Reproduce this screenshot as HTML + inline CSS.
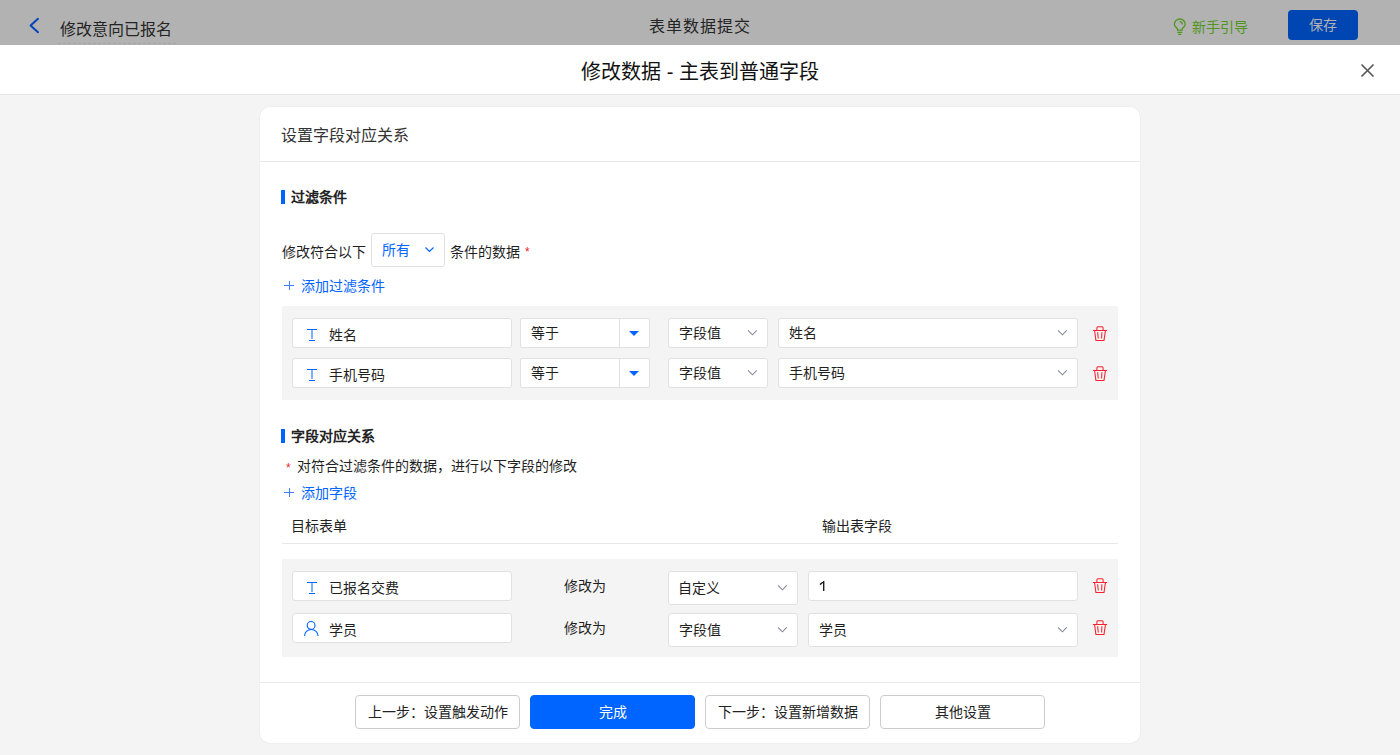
<!DOCTYPE html>
<html lang="zh-CN">
<head>
<meta charset="utf-8">
<style>
*{margin:0;padding:0;box-sizing:border-box}
html,body{width:1400px;height:755px;overflow:hidden;background:#f4f4f4;font-family:"Liberation Sans",sans-serif;color:#1f1f1f;position:relative}
.a{position:absolute;white-space:nowrap}
.t14{font-size:14px;line-height:20px;height:20px}
.t16{font-size:16px;line-height:22px;height:22px}
.box{position:absolute;background:#fff;border:1px solid #e1e1e1;border-radius:3px}
.chev{position:absolute;width:9px;height:5px;overflow:visible}
.trash{position:absolute;width:16px;height:16px}
.btn{position:absolute;top:695px;height:34px;width:165px;border:1px solid #cdcdcd;border-radius:4px;background:#fff;font-size:14px;line-height:32px;text-align:center;color:#222}
</style>
</head>
<body>
<!-- top bar (under modal mask) -->
<div class="a" style="left:0;top:0;width:1400px;height:45px;background:#b2b2b2"></div>
<svg class="a" style="left:28px;top:17px" width="12" height="17" viewBox="0 0 12 17"><path d="M10 1.8 L2.6 8.5 L10 15.2" fill="none" stroke="#0044bb" stroke-width="2" stroke-linecap="round" stroke-linejoin="round"/></svg>
<div class="a t16" style="left:60px;top:19px;color:#242424">修改意向已报名</div>
<div class="a" style="left:58px;top:43px;width:118px;height:1px;border-top:1px dashed #a4a4a4"></div>
<div class="a t16" style="left:649px;top:16px;color:#242424;letter-spacing:1px">表单数据提交</div>
<svg class="a" style="left:1168px;top:14px" width="24" height="24" viewBox="0 0 24 24"><path d="M9.5 16.2 V15.3 C9.5 13.9 6.4 12.9 6.4 10.4 A5.4 5.4 0 0 1 17.2 10.4 C17.2 12.9 14.1 13.9 14.1 15.3 V16.2 Z" fill="none" stroke="#50961e" stroke-width="1.3"/><path d="M9.3 18.4 H14.3 M10.2 20.3 H13.3" stroke="#50961e" stroke-width="1.2"/><path d="M11.5 7.6 A2.9 2.9 0 0 1 14.4 10.5" fill="none" stroke="#50961e" stroke-width="1.2"/></svg>
<div class="a t14" style="left:1192px;top:17px;color:#50961e">新手引导</div>
<div class="a" style="left:1288px;top:10px;width:70px;height:30px;background:#0046b2;border-radius:4px;color:#b2b2b2;font-size:14px;line-height:30px;text-align:center">保存</div>

<!-- modal header -->
<div class="a" style="left:0;top:45px;width:1400px;height:50px;background:#fff;border-bottom:1px solid #e5e5e5"></div>
<div class="a" style="left:0;top:58px;width:1400px;text-align:center;font-size:20px;line-height:28px;color:#111">修改数据 - 主表到普通字段</div>
<svg class="a" style="left:1360px;top:63px" width="15" height="15" viewBox="0 0 15 15"><path d="M1.5 1.5 L13.5 13.5 M13.5 1.5 L1.5 13.5" stroke="#555" stroke-width="1.6"/></svg>

<!-- card -->
<div class="a" style="left:260px;top:107px;width:880px;height:636px;background:#fff;border-radius:10px;box-shadow:0 0 2px rgba(0,0,0,0.08)"></div>
<div class="a t16" style="left:281px;top:125px;color:#333">设置字段对应关系</div>
<div class="a" style="left:260px;top:161px;width:880px;height:1px;background:#e8e8e8"></div>

<!-- section 1 -->
<div class="a" style="left:281px;top:190px;width:4px;height:14px;background:#0064ff"></div>
<div class="a t14" style="left:291px;top:187px;font-weight:bold;color:#222">过滤条件</div>

<div class="a t14" style="left:282px;top:242px">修改符合以下</div>
<div class="box" style="left:371px;top:233px;width:74px;height:34px"></div>
<div class="a t14" style="left:382px;top:240px;color:#0064ff">所有</div>
<svg class="chev" style="left:425px;top:247px" viewBox="0 0 9 5"><path d="M0.5 0.5 L4.5 4.5 L8.5 0.5" fill="none" stroke="#0064ff" stroke-width="1.1"/></svg>
<div class="a t14" style="left:450px;top:242px">条件的数据</div>
<div class="a" style="left:525px;top:245px;font-size:12px;line-height:14px;color:#f5222d">*</div>

<svg class="a" style="left:284px;top:281px" width="10" height="10" viewBox="0 0 10 10"><rect x="5" y="0" width="1" height="9" fill="#3d7fff"/><rect x="0" y="4" width="10" height="1" fill="#3d7fff"/></svg>
<div class="a t14" style="left:301px;top:276px;color:#0064ff">添加过滤条件</div>

<div class="a" style="left:282px;top:306px;width:836px;height:94px;background:#f4f4f4"></div>

<!-- filter row 1 -->
<div class="box" style="left:292px;top:318px;width:220px;height:30px"></div>
<svg class="a" style="left:305px;top:329px" width="12" height="13" viewBox="0 0 12 13"><rect x="2" y="0" width="10" height="1" fill="#0064ff"/><rect x="6.5" y="1" width="1" height="9" fill="#0064ff"/><rect x="4" y="11" width="6" height="1" fill="#0064ff"/></svg>
<div class="a t14" style="left:329px;top:325px">姓名</div>
<div class="box" style="left:520px;top:318px;width:130px;height:30px;border-radius:2px"></div>
<div class="a" style="left:619px;top:319px;width:1px;height:28px;background:#e1e1e1"></div>
<div class="a t14" style="left:531px;top:323px">等于</div>
<svg class="a" style="left:629px;top:331px" width="10" height="5" viewBox="0 0 10 5"><path d="M0 0 H10 L5 5 Z" fill="#0064ff"/></svg>
<div class="box" style="left:668px;top:318px;width:100px;height:30px"></div>
<div class="a t14" style="left:679px;top:323px">字段值</div>
<svg class="chev" style="left:748px;top:330px" viewBox="0 0 9 5"><path d="M0 0.3 L4.4 4.8 L8.8 0.3" fill="none" stroke="#808899" stroke-width="1.05"/></svg>
<div class="box" style="left:778px;top:318px;width:300px;height:30px"></div>
<div class="a t14" style="left:789px;top:323px">姓名</div>
<svg class="chev" style="left:1058px;top:330px" viewBox="0 0 9 5"><path d="M0 0.3 L4.4 4.8 L8.8 0.3" fill="none" stroke="#808899" stroke-width="1.05"/></svg>
<svg class="a" style="left:1088px;top:322px" width="24" height="24" viewBox="0 0 24 24"><path d="M8.9 8 V5.8 Q8.9 4.8 9.9 4.8 H14.1 Q15.1 4.8 15.1 5.8 V8 M4.9 8.5 H19.1 M6.6 8.8 L7.9 18.4 H16 L17.4 8.8 M9.6 10.2 L10.3 16.5 M13.9 10.2 L13.6 16.5" fill="none" stroke="#f5222d" stroke-width="1.05"/></svg>

<!-- filter row 2 -->
<div class="box" style="left:292px;top:358px;width:220px;height:30px"></div>
<svg class="a" style="left:305px;top:369px" width="12" height="13" viewBox="0 0 12 13"><rect x="2" y="0" width="10" height="1" fill="#0064ff"/><rect x="6.5" y="1" width="1" height="9" fill="#0064ff"/><rect x="4" y="11" width="6" height="1" fill="#0064ff"/></svg>
<div class="a t14" style="left:329px;top:365px">手机号码</div>
<div class="box" style="left:520px;top:358px;width:130px;height:30px;border-radius:2px"></div>
<div class="a" style="left:619px;top:359px;width:1px;height:28px;background:#e1e1e1"></div>
<div class="a t14" style="left:531px;top:363px">等于</div>
<svg class="a" style="left:629px;top:371px" width="10" height="5" viewBox="0 0 10 5"><path d="M0 0 H10 L5 5 Z" fill="#0064ff"/></svg>
<div class="box" style="left:668px;top:358px;width:100px;height:30px"></div>
<div class="a t14" style="left:679px;top:363px">字段值</div>
<svg class="chev" style="left:748px;top:370px" viewBox="0 0 9 5"><path d="M0 0.3 L4.4 4.8 L8.8 0.3" fill="none" stroke="#808899" stroke-width="1.05"/></svg>
<div class="box" style="left:778px;top:358px;width:300px;height:30px"></div>
<div class="a t14" style="left:789px;top:363px">手机号码</div>
<svg class="chev" style="left:1058px;top:370px" viewBox="0 0 9 5"><path d="M0 0.3 L4.4 4.8 L8.8 0.3" fill="none" stroke="#808899" stroke-width="1.05"/></svg>
<svg class="a" style="left:1088px;top:362px" width="24" height="24" viewBox="0 0 24 24"><path d="M8.9 8 V5.8 Q8.9 4.8 9.9 4.8 H14.1 Q15.1 4.8 15.1 5.8 V8 M4.9 8.5 H19.1 M6.6 8.8 L7.9 18.4 H16 L17.4 8.8 M9.6 10.2 L10.3 16.5 M13.9 10.2 L13.6 16.5" fill="none" stroke="#f5222d" stroke-width="1.05"/></svg>

<!-- section 2 -->
<div class="a" style="left:281px;top:429px;width:4px;height:14px;background:#0064ff"></div>
<div class="a t14" style="left:291px;top:426px;font-weight:bold;color:#222">字段对应关系</div>
<div class="a" style="left:286px;top:461px;font-size:12px;line-height:14px;color:#f5222d">*</div>
<div class="a t14" style="left:297px;top:456px">对符合过滤条件的数据，进行以下字段的修改</div>
<svg class="a" style="left:284px;top:488px" width="10" height="10" viewBox="0 0 10 10"><rect x="5" y="0" width="1" height="9" fill="#3d7fff"/><rect x="0" y="4" width="10" height="1" fill="#3d7fff"/></svg>
<div class="a t14" style="left:301px;top:483px;color:#0064ff">添加字段</div>
<div class="a t14" style="left:291px;top:516px">目标表单</div>
<div class="a t14" style="left:822px;top:516px">输出表字段</div>
<div class="a" style="left:282px;top:543px;width:836px;height:1px;background:#e8e8e8"></div>

<div class="a" style="left:282px;top:559px;width:836px;height:98px;background:#f4f4f4"></div>

<!-- map row 1 -->
<div class="box" style="left:292px;top:571px;width:220px;height:30px"></div>
<svg class="a" style="left:305px;top:582px" width="12" height="13" viewBox="0 0 12 13"><rect x="2" y="0" width="10" height="1" fill="#0064ff"/><rect x="6.5" y="1" width="1" height="9" fill="#0064ff"/><rect x="4" y="11" width="6" height="1" fill="#0064ff"/></svg>
<div class="a t14" style="left:329px;top:578px">已报名交费</div>
<div class="a t14" style="left:564px;top:576px">修改为</div>
<div class="box" style="left:668px;top:571px;width:130px;height:34px"></div>
<div class="a t14" style="left:678px;top:578px">自定义</div>
<svg class="chev" style="left:778px;top:585px" viewBox="0 0 9 5"><path d="M0 0.3 L4.4 4.8 L8.8 0.3" fill="none" stroke="#808899" stroke-width="1.05"/></svg>
<div class="box" style="left:808px;top:571px;width:270px;height:30px"></div>
<svg class="a" style="left:819px;top:580px" width="7" height="12" viewBox="0 0 7 12"><path d="M1 4.6 L4.6 1.5 M4.7 1 V11" fill="none" stroke="#1f1f1f" stroke-width="1.4"/></svg>
<svg class="a" style="left:1088px;top:574px" width="24" height="24" viewBox="0 0 24 24"><path d="M8.9 8 V5.8 Q8.9 4.8 9.9 4.8 H14.1 Q15.1 4.8 15.1 5.8 V8 M4.9 8.5 H19.1 M6.6 8.8 L7.9 18.4 H16 L17.4 8.8 M9.6 10.2 L10.3 16.5 M13.9 10.2 L13.6 16.5" fill="none" stroke="#f5222d" stroke-width="1.05"/></svg>

<!-- map row 2 -->
<div class="box" style="left:292px;top:613px;width:220px;height:30px"></div>
<svg class="a" style="left:303px;top:620px" width="17" height="17" viewBox="0 0 17 17"><circle cx="8.1" cy="5.4" r="3.9" fill="none" stroke="#0064ff" stroke-width="1.1"/><path d="M1.5 16 A6.8 6.5 0 0 1 15.1 16" fill="none" stroke="#0064ff" stroke-width="1.1"/></svg>
<div class="a t14" style="left:329px;top:620px">学员</div>
<div class="a t14" style="left:564px;top:618px">修改为</div>
<div class="box" style="left:668px;top:613px;width:130px;height:34px"></div>
<div class="a t14" style="left:679px;top:620px">字段值</div>
<svg class="chev" style="left:778px;top:627px" viewBox="0 0 9 5"><path d="M0 0.3 L4.4 4.8 L8.8 0.3" fill="none" stroke="#808899" stroke-width="1.05"/></svg>
<div class="box" style="left:808px;top:613px;width:270px;height:34px"></div>
<div class="a t14" style="left:819px;top:620px">学员</div>
<svg class="chev" style="left:1058px;top:627px" viewBox="0 0 9 5"><path d="M0 0.3 L4.4 4.8 L8.8 0.3" fill="none" stroke="#808899" stroke-width="1.05"/></svg>
<svg class="a" style="left:1088px;top:616px" width="24" height="24" viewBox="0 0 24 24"><path d="M8.9 8 V5.8 Q8.9 4.8 9.9 4.8 H14.1 Q15.1 4.8 15.1 5.8 V8 M4.9 8.5 H19.1 M6.6 8.8 L7.9 18.4 H16 L17.4 8.8 M9.6 10.2 L10.3 16.5 M13.9 10.2 L13.6 16.5" fill="none" stroke="#f5222d" stroke-width="1.05"/></svg>

<!-- footer -->
<div class="a" style="left:260px;top:682px;width:880px;height:1px;background:#e8e8e8"></div>
<div class="btn" style="left:355px">上一步：设置触发动作</div>
<div class="btn" style="left:530px;background:#0064ff;border-color:#0064ff;color:#fff">完成</div>
<div class="btn" style="left:705px">下一步：设置新增数据</div>
<div class="btn" style="left:880px">其他设置</div>
</body>
</html>
